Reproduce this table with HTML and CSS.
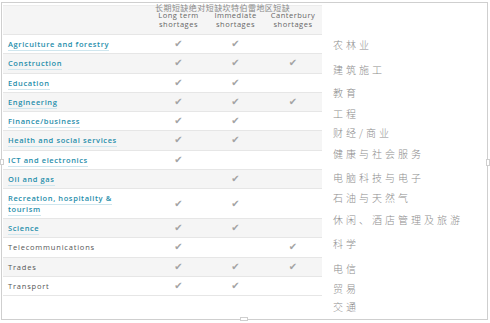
FILE: index.html
```html
<!DOCTYPE html>
<html>
<head>
<meta charset="utf-8">
<link rel="stylesheet" href="styles.css">
</head>
<body>
<div class="frame">
  <div class="title-cn">长期短缺绝对短缺坎特伯雷地区短缺</div>
  <table class="grid">
    <colgroup>
      <col class="c-name"><col class="c-check"><col class="c-check"><col class="c-check-last">
    </colgroup>
    <thead>
      <tr><th></th><th>Long term<br>shortages</th><th>Immediate<br>shortages</th><th>Canterbury<br>shortages</th></tr>
    </thead>
    <tbody>
      <tr><td><a class="lnk">Agriculture and forestry</a></td><td class="ck">✔</td><td class="ck">✔</td><td class="ck"></td></tr>
      <tr><td><a class="lnk">Construction</a></td><td class="ck">✔</td><td class="ck">✔</td><td class="ck">✔</td></tr>
      <tr><td><a class="lnk">Education</a></td><td class="ck">✔</td><td class="ck">✔</td><td class="ck"></td></tr>
      <tr><td><a class="lnk">Engineering</a></td><td class="ck">✔</td><td class="ck">✔</td><td class="ck">✔</td></tr>
      <tr><td><a class="lnk">Finance/business</a></td><td class="ck">✔</td><td class="ck">✔</td><td class="ck"></td></tr>
      <tr><td><a class="lnk">Health and social services</a></td><td class="ck">✔</td><td class="ck">✔</td><td class="ck"></td></tr>
      <tr><td><a class="lnk">ICT and electronics</a></td><td class="ck">✔</td><td class="ck"></td><td class="ck"></td></tr>
      <tr><td><a class="lnk">Oil and gas</a></td><td class="ck"></td><td class="ck">✔</td><td class="ck"></td></tr>
      <tr><td><a class="lnk">Recreation, hospitality &amp;<br>tourism</a></td><td class="ck">✔</td><td class="ck">✔</td><td class="ck"></td></tr>
      <tr><td><a class="lnk">Science</a></td><td class="ck">✔</td><td class="ck">✔</td><td class="ck"></td></tr>
      <tr><td class="plain">Telecommunications</td><td class="ck">✔</td><td class="ck"></td><td class="ck">✔</td></tr>
      <tr><td class="plain">Trades</td><td class="ck">✔</td><td class="ck">✔</td><td class="ck">✔</td></tr>
      <tr><td class="plain">Transport</td><td class="ck">✔</td><td class="ck">✔</td><td class="ck"></td></tr>
    </tbody>
  </table>
  <ul class="cn-list">
    <li>农林业</li>
    <li>建筑施工</li>
    <li>教育</li>
    <li>工程</li>
    <li>财经/商业</li>
    <li>健康与社会服务</li>
    <li>电脑科技与电子</li>
    <li>石油与天然气</li>
    <li>休闲、酒店管理及旅游</li>
    <li>科学</li>
    <li>电信</li>
    <li>贸易</li>
    <li>交通</li>
  </ul>
  <span class="handle handle-left"></span>
  <span class="handle handle-right"></span>
  <span class="handle handle-bottom"></span>
</div>
</body>
</html>
```
FILE: styles.css
```css
html, body {
  margin: 0;
  padding: 0;
  background: #ffffff;
}
body {
  width: 490px;
  height: 323px;
  overflow: hidden;
  font-family: "Open Sans", "Noto Sans", sans-serif;
}
.frame {
  position: relative;
  box-sizing: border-box;
  margin: 2px 0 0 1px;
  width: 487px;
  height: 318px;
  border: 1px solid #cfcfcf;
  padding: 2px 0 0 1px;
  display: flex;
  align-items: flex-start;
}
.title-cn {
  position: absolute;
  left: 153px;
  top: 0;
  font-family: "Noto Sans CJK SC", sans-serif;
  font-size: 8px;
  line-height: 10px;
  letter-spacing: 0.45px;
  color: #8a8a8a;
  white-space: nowrap;
}
.grid {
  border-collapse: collapse;
  table-layout: fixed;
  width: 319px;
  border-top: 1px solid #ececec;
  flex: none;
}
.c-name { width: 147px; }
.c-check { width: 57px; }
.c-check-last { width: 58px; }
.grid th {
  background: #f5f5f5;
  height: 28px;
  padding: 0;
  font-size: 7.5px;
  line-height: 9px;
  font-weight: 400;
  letter-spacing: 0.5px;
  color: #666;
  text-align: center;
  vertical-align: middle;
  border-bottom: 1px solid #e6e6e6;
}
.grid td {
  padding: 4px 0 4px 5px;
  font-size: 7.5px;
  line-height: 10.3px;
  border-bottom: 1px solid #e6e6e6;
  vertical-align: middle;
}
.grid tbody tr:nth-child(even) td {
  background: #f5f5f5;
}
.lnk {
  color: #1f8eab;
  font-weight: 600;
  letter-spacing: 0.6px;
  border-bottom: 1px solid #cfe6ee;
  padding-bottom: 1px;
}
.plain {
  color: #555;
  letter-spacing: 0.8px;
}
.grid td.ck {
  padding-left: 0;
  text-align: center;
  font-family: "DejaVu Sans", sans-serif;
  font-size: 10px;
  color: #a3a3a3;
}
.cn-list {
  list-style: none;
  margin: 0 0 0 11px;
  padding: 33px 0 0 0;
  font-family: "Noto Sans CJK SC", sans-serif;
  font-size: 10px;
  font-weight: 300;
  line-height: 14px;
  letter-spacing: 3px;
  color: #8c8c8c;
  white-space: nowrap;
}
.cn-list li:nth-child(2) { margin-top: 11px; }
.cn-list li:nth-child(3) { margin-top: 9px; }
.cn-list li:nth-child(4) { margin-top: 7px; }
.cn-list li:nth-child(5) { margin-top: 5px; }
.cn-list li:nth-child(6) { margin-top: 7px; }
.cn-list li:nth-child(7) { margin-top: 10px; }
.cn-list li:nth-child(8) { margin-top: 6px; }
.cn-list li:nth-child(9) { margin-top: 8px; }
.cn-list li:nth-child(10) { margin-top: 10px; }
.cn-list li:nth-child(11) { margin-top: 11px; }
.cn-list li:nth-child(12) { margin-top: 6px; }
.cn-list li:nth-child(13) { margin-top: 4px; }
.handle {
  position: absolute;
  box-sizing: border-box;
  background: #fff;
  border: 1px solid #cfcfcf;
}
.handle-left {
  left: -2px;
  top: 156px;
  width: 4px;
  height: 6px;
}
.handle-right {
  right: -3px;
  top: 156px;
  width: 4px;
  height: 7px;
}
.handle-bottom {
  left: 238px;
  bottom: -2px;
  width: 8px;
  height: 4px;
}
```
